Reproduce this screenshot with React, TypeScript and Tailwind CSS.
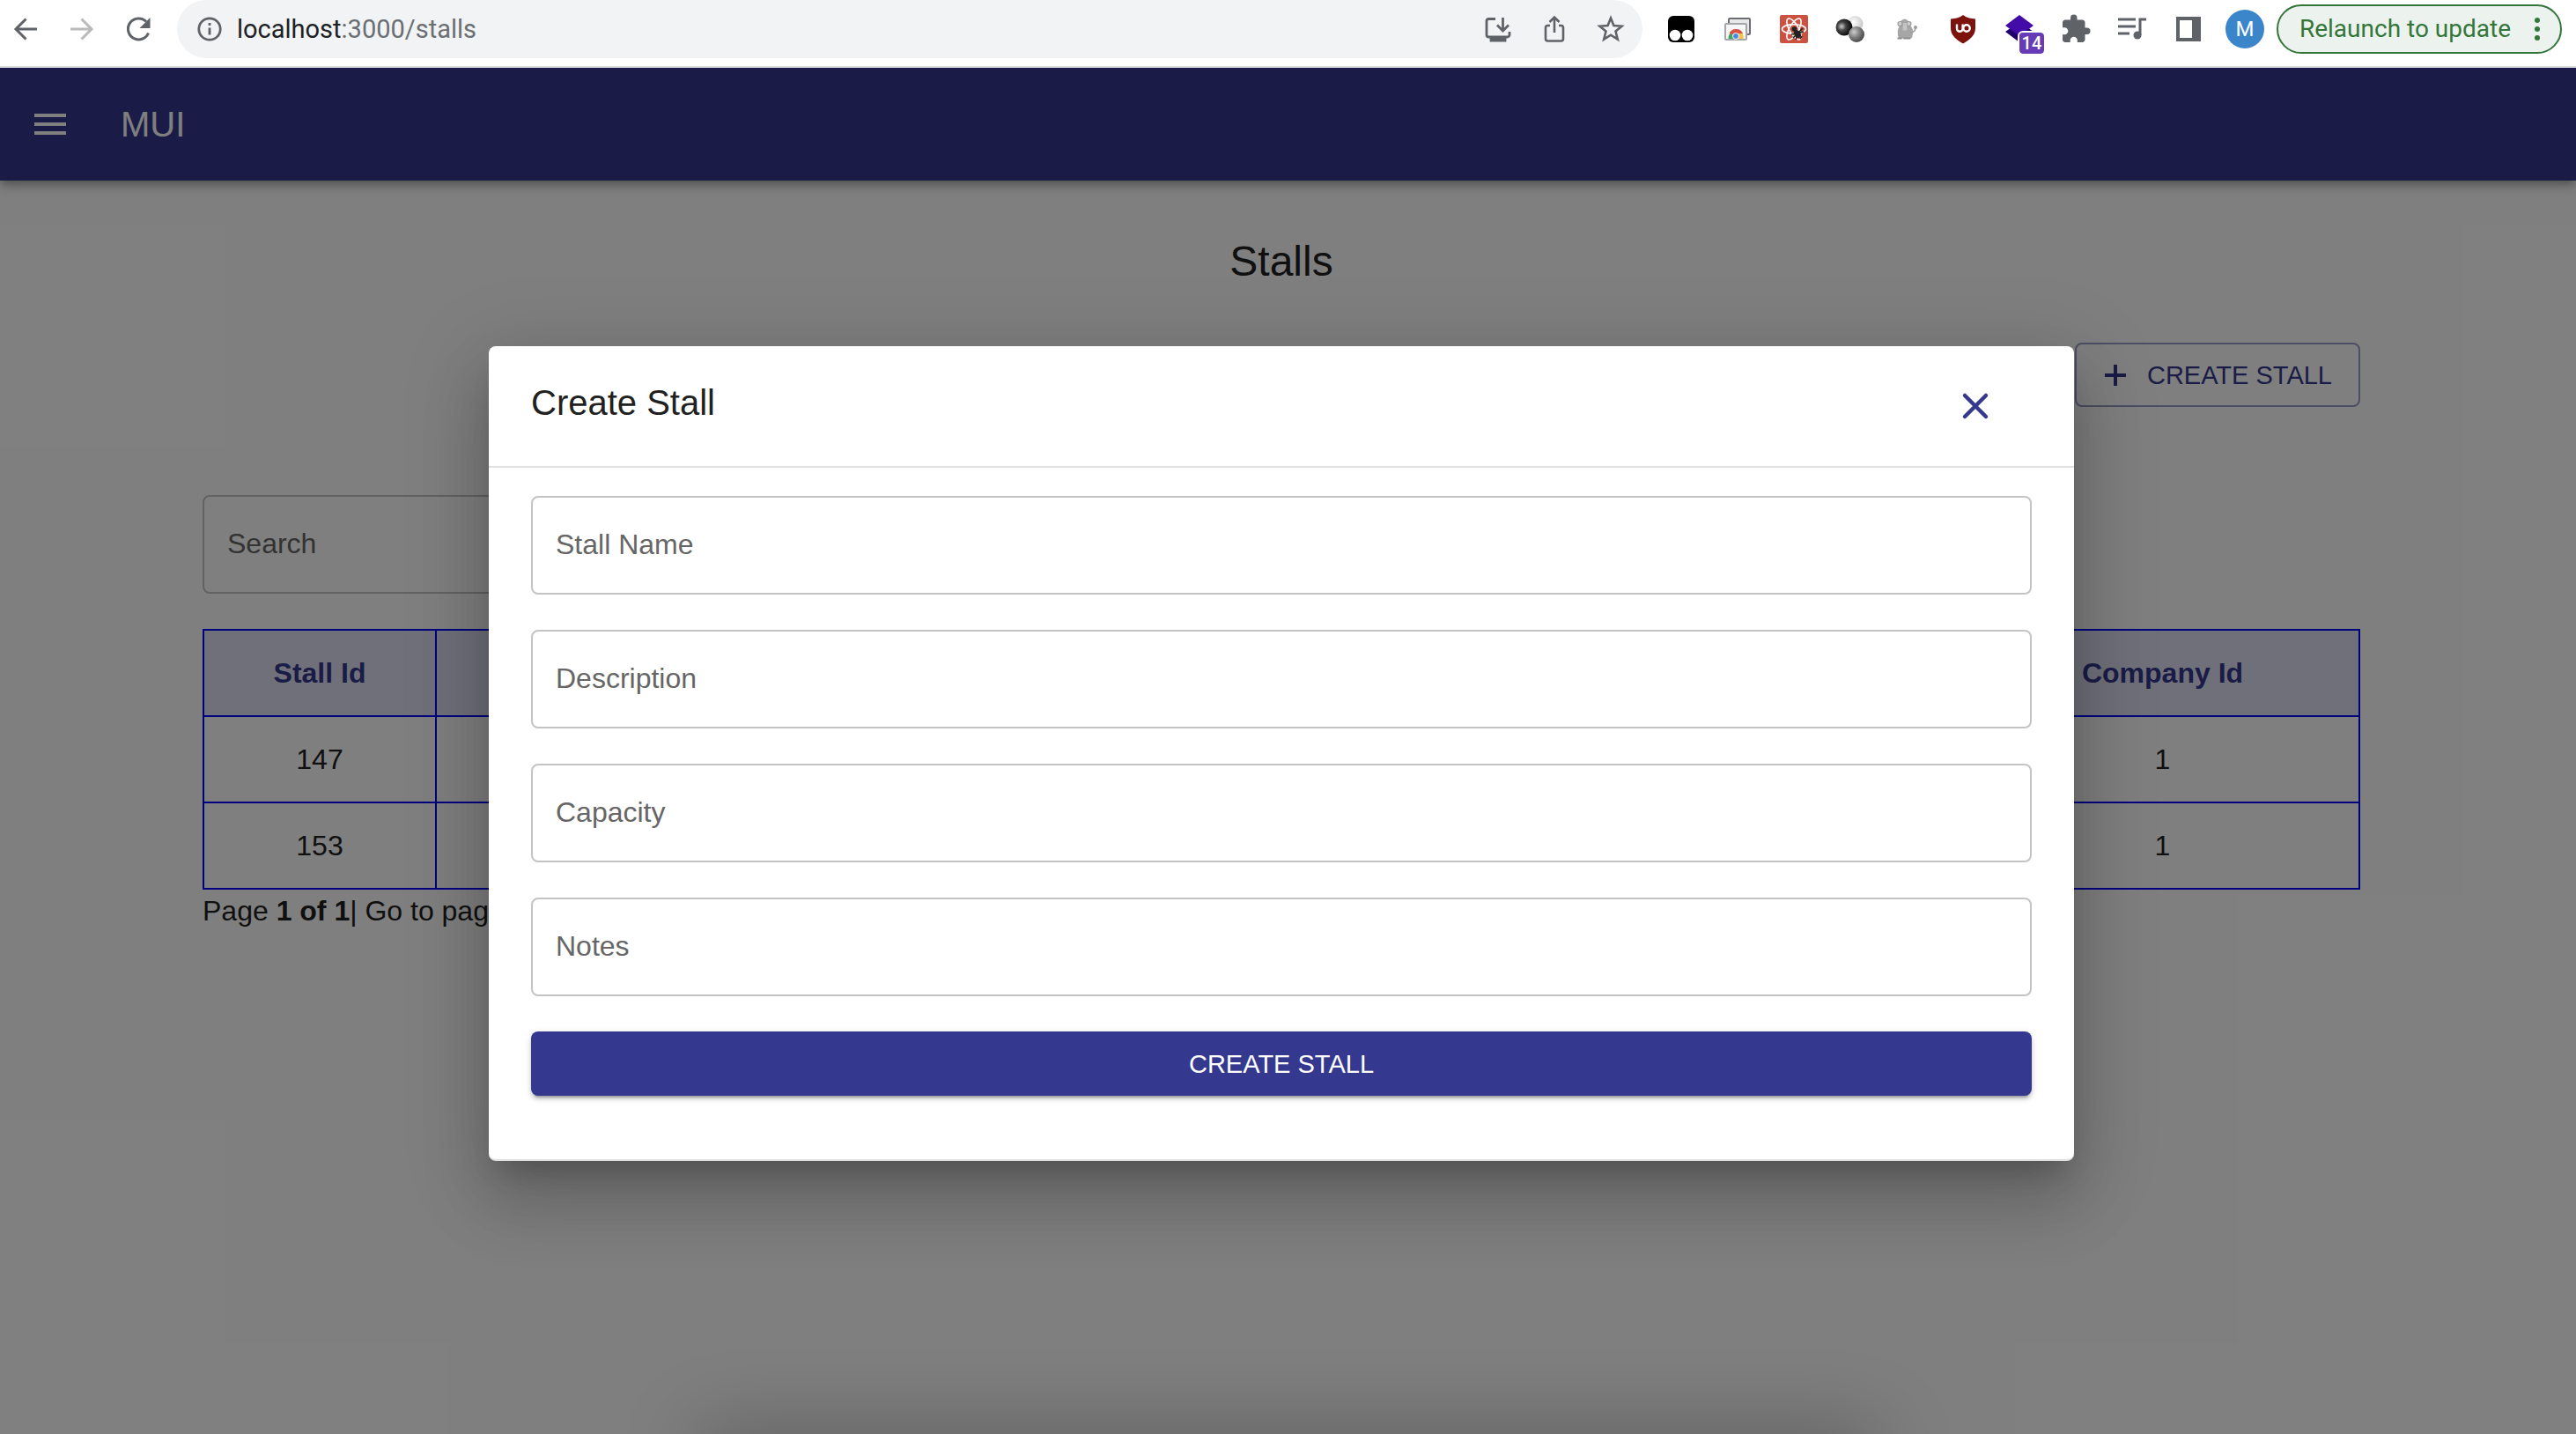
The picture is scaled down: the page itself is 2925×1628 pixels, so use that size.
import type { ReactNode } from "react";

function IconButton({ label, children }: { label: string; children: ReactNode }) {
  return (
    <button type="button" aria-label={label} className="relative flex h-8 w-8 shrink-0 items-center justify-center">
      {children}
    </button>
  );
}

const svg = "block h-9 w-9 shrink-0 overflow-visible";

function BackIcon() {
  return (
    <svg viewBox="0 0 36 36" className={svg} fill="none" stroke="currentColor" strokeWidth="3">
      <path d="M31 18H7M18.500 6.500 7 18l11.500 11.500" />
    </svg>
  );
}

function ForwardIcon() {
  return (
    <svg viewBox="0 0 36 36" className={svg} fill="none" stroke="currentColor" strokeWidth="3">
      <path d="M5 18h24M17.500 6.500 29 18 17.500 29.500" />
    </svg>
  );
}

function ReloadIcon() {
  return (
    <svg viewBox="0 0 36 36" className={svg} fill="none">
      <path d="M29.500 22.500A12 12 0 1 1 27 9.500" stroke="currentColor" strokeWidth="3" />
      <path d="M31.500 5v12h-12z" fill="currentColor" />
    </svg>
  );
}

function InfoIcon() {
  return (
    <svg viewBox="0 0 36 36" className={svg} fill="none" stroke="currentColor" strokeWidth="2.800">
      <circle cx="18" cy="18" r="12.200" />
      <path d="M18 16.500v8M18 11v3" />
    </svg>
  );
}

function InstallIcon() {
  return (
    <svg viewBox="0 0 36 36" className={svg} fill="none" stroke="currentColor" strokeWidth="2.800">
      <path d="M15 6.500H7.500a2.500 2.500 0 0 0-2.500 2.500v15.500a2.500 2.500 0 0 0 2.500 2.500h21a2.500 2.500 0 0 0 2.500-2.500V21" />
      <path d="M23.500 5v14M17 13.500l6.500 6.500 6.500-6.500" />
      <path d="M10 28h16v3H10z" fill="currentColor" />
    </svg>
  );
}

function ShareIcon() {
  return (
    <svg viewBox="0 0 36 36" className={svg} fill="none" stroke="currentColor" strokeWidth="2.600">
      <path d="M13 14H10.500A2.500 2.500 0 0 0 8 16.500V29a2.500 2.500 0 0 0 2.500 2.500h15A2.500 2.500 0 0 0 28 29V16.500a2.500 2.500 0 0 0-2.500-2.500H23" />
      <path d="M18 22V5.500M12.500 10 18 4.500l5.500 5.500" />
    </svg>
  );
}

function StarIcon() {
  return (
    <svg viewBox="0 0 36 36" className={svg} fill="none" stroke="currentColor" strokeWidth="2.600">
      <path d="m18 5.500 3.400 8.600 9.100.7-7 5.800 2.300 9L18 24.700l-7.800 4.900 2.300-9-7-5.800 9.100-.7z" />
    </svg>
  );
}

function MonkeyIcon() {
  return (
    <svg viewBox="0 0 36 36" className={svg}>
      <rect x="3" y="3" width="30" height="30" rx="6" fill="#000" />
      <circle cx="11" cy="25" r="6.300" fill="#fff" />
      <circle cx="25" cy="25" r="6.300" fill="#fff" />
    </svg>
  );
}

function RemoteIcon() {
  return (
    <svg viewBox="0 0 36 36" className={svg}>
      <rect x="8" y="6" width="24" height="18" rx="1" fill="#e9e9e9" stroke="#6b6f73" strokeWidth="2" />
      <rect x="4" y="12" width="24" height="18" rx="1" fill="#f6f6f6" stroke="#a4a7aa" strokeWidth="2" />
      <path d="M7.500 29a8.500 8.500 0 0 1 3-7l5 7z" fill="#3fa557" />
      <path d="M8.500 23a8.500 8.500 0 0 1 15.500 0l-8 2z" fill="#d8503f" />
      <path d="M24.500 29a8.500 8.500 0 0 0-1-6h-7l2 6z" fill="#f6c443" />
      <circle cx="16" cy="26" r="3.500" fill="#4a86e8" stroke="#fff" strokeWidth="1" />
    </svg>
  );
}

function ReactDevIcon() {
  return (
    <svg viewBox="0 0 36 36" className={svg}>
      <rect x="2" y="2" width="32" height="32" rx="2" fill="#cb5140" />
      <g fill="none" stroke="#fff" strokeWidth="1.600">
        <ellipse cx="18" cy="18" rx="13.500" ry="5.200" />
        <ellipse cx="18" cy="18" rx="13.500" ry="5.200" transform="rotate(60 18 18)" />
        <ellipse cx="18" cy="18" rx="13.500" ry="5.200" transform="rotate(120 18 18)" />
      </g>
      <ellipse cx="22" cy="23.500" rx="3.500" ry="5" transform="rotate(-35 22 23.500)" fill="#222" />
      <circle cx="18.500" cy="18" r="2.800" fill="#222" />
      <path d="m15 24 14-3M17 28l11-11M20 30l3-8M25 29l2-3" stroke="#222" strokeWidth="1.600" />
    </svg>
  );
}

function SpheresIcon() {
  return (
    <svg viewBox="0 0 36 36" className={svg}>
      <defs>
        <radialGradient id="sphereDark" cx="35%" cy="45%" r="65%">
          <stop offset="0" stopColor="#ccc" />
          <stop offset="0.400" stopColor="#444" />
          <stop offset="1" stopColor="#000" />
        </radialGradient>
        <radialGradient id="sphereLight" cx="40%" cy="40%" r="65%">
          <stop offset="0" stopColor="#fff" />
          <stop offset="1" stopColor="#c4c4c4" />
        </radialGradient>
        <radialGradient id="sphereMid" cx="35%" cy="35%" r="70%">
          <stop offset="0" stopColor="#ccc" />
          <stop offset="0.500" stopColor="#808080" />
          <stop offset="1" stopColor="#444" />
        </radialGradient>
      </defs>
      <circle cx="23.500" cy="12" r="9" fill="url(#sphereLight)" />
      <circle cx="11" cy="16" r="9.500" fill="url(#sphereDark)" />
      <circle cx="25" cy="24" r="9" fill="url(#sphereMid)" />
    </svg>
  );
}

function MascotIcon() {
  return (
    <svg viewBox="0 0 36 36" className={svg}>
      <path d="M11 9q5-5 9 0l2 5q4 4 3 9l-1 5q-7 2-15 0-3-7 1-14z" fill="#a6a6a6" />
      <circle cx="10.500" cy="12" r="2.500" fill="#d0d0d0" stroke="#9a9a9a" strokeWidth="1.200" />
      <circle cx="20.500" cy="12" r="2.500" fill="#d0d0d0" stroke="#9a9a9a" strokeWidth="1.200" />
      <path d="M14 11h4l.500 8q-2.500 1.500-5 0z" fill="#c4c4c4" />
      <path d="M7.500 28.500h5M14.500 28.500h8" stroke="#8c8c8c" strokeWidth="2" />
      <path d="m24 22 3-2 1-3" fill="none" stroke="#999" strokeWidth="1.500" />
      <circle cx="28" cy="16" r="2" fill="#999" />
    </svg>
  );
}

function ShieldIcon() {
  return (
    <svg viewBox="0 0 36 36" className={svg}>
      <path d="M18 2c4 3 8 4 14 4.500V17c0 8-6 13-14 17.500C10 30 4 25 4 17V6.500C10 6 14 5 18 2z" fill="#7c130d" />
      <path d="M11 12.500v5a3.300 3.300 0 0 0 6.600 0v-5" fill="none" stroke="#fff" strokeWidth="2.400" />
      <circle cx="22" cy="17" r="3.700" fill="none" stroke="#fff" strokeWidth="2.400" />
    </svg>
  );
}

function LayersIcon() {
  return (
    <svg viewBox="0 0 36 36" className={svg}>
      <path d="m18 10 16 11-16 12L2 21z" fill="#21006b" />
      <path d="m18 2 16 12-16 12L2 14z" fill="#430ca8" />
    </svg>
  );
}

function PuzzleIcon() {
  return (
    <svg viewBox="0 0 24 24" className={svg} fill="currentColor">
      <path d="M20.500 11H19V7c0-1.100-.9-2-2-2h-4V3.500a2.500 2.500 0 0 0-5 0V5H4c-1.100 0-1.990.9-1.990 2v3.800H3.500c1.490 0 2.700 1.210 2.700 2.700s-1.210 2.700-2.700 2.700H2V20c0 1.100.9 2 2 2h3.800v-1.500c0-1.490 1.210-2.700 2.700-2.700s2.700 1.210 2.700 2.700V22H17c1.100 0 2-.9 2-2v-4h1.500a2.500 2.500 0 0 0 0-5z" />
    </svg>
  );
}

function QueueIcon() {
  return (
    <svg viewBox="0 0 36 36" className={svg} fill="none" stroke="currentColor" strokeWidth="3">
      <path d="M2 7h20M2 15h20M2 23h13M27 25V7h7" />
      <circle cx="24" cy="25" r="4.500" fill="currentColor" stroke="none" />
    </svg>
  );
}

function PanelIcon() {
  return (
    <svg viewBox="0 0 36 36" className={svg} fill="currentColor">
      <path fillRule="evenodd" d="M4 4h28v28H4zM8 8h14v20H8z" />
    </svg>
  );
}

function BrowserBar() {
  return (
    <div className="relative flex h-[77px] shrink-0 items-start border-b-2 border-[#dadcdf] bg-white pr-4 pl-[13px] text-[#5f6368]">
      <div className="flex h-[66px] items-center gap-8 pr-7">
        <IconButton label="Back"><BackIcon /></IconButton>
        <span className="flex text-[#bababc]">
          <IconButton label="Forward"><ForwardIcon /></IconButton>
        </span>
        <IconButton label="Reload"><ReloadIcon /></IconButton>
      </div>
      <div className="flex h-[66px] min-w-0 flex-1 items-center rounded-full bg-[#f1f3f4] pr-5 pl-[21px]">
        <IconButton label="Site information"><InfoIcon /></IconButton>
        <div className="ml-[15px] flex-1 font-[Roboto,sans-serif] text-[29px] leading-9 text-[#6b6e72]">
          <span className="text-[#202124]">localhost</span>:3000/stalls
        </div>
        <div className="flex gap-8">
          <IconButton label="Install app"><InstallIcon /></IconButton>
          <IconButton label="Share"><ShareIcon /></IconButton>
          <IconButton label="Bookmark"><StarIcon /></IconButton>
        </div>
      </div>
      <div className="flex h-[66px] shrink-0 items-center gap-8 pl-7">
        <IconButton label="Userscripts"><MonkeyIcon /></IconButton>
        <IconButton label="Remote desktop"><RemoteIcon /></IconButton>
        <IconButton label="React developer tools"><ReactDevIcon /></IconButton>
        <IconButton label="Spheres"><SpheresIcon /></IconButton>
        <IconButton label="Mascot"><MascotIcon /></IconButton>
        <IconButton label="Content blocker"><ShieldIcon /></IconButton>
        <IconButton label="Layers">
          <LayersIcon />
          <span className="absolute top-5 left-4 flex h-6 w-7 items-center justify-center rounded bg-[#673ab7] font-[Roboto,sans-serif] text-xl leading-6 font-medium text-white outline-2 outline-white">
            14
          </span>
        </IconButton>
        <IconButton label="Extensions"><PuzzleIcon /></IconButton>
        <IconButton label="Media controls"><QueueIcon /></IconButton>
        <IconButton label="Side panel"><PanelIcon /></IconButton>
      </div>
      <div className="flex h-[66px] shrink-0 items-center gap-3.5 pl-[26px]">
        <button type="button" className="flex h-11 w-11 items-center justify-center rounded-full bg-[#3b86cb] font-[Roboto,sans-serif] text-2xl text-white">
          M
        </button>
        <button type="button" className="flex h-14 items-center gap-5 rounded-full border-2 border-[#34763a] bg-[#ecf3ef] pr-4 pl-6 font-[Roboto,sans-serif] text-[28px] leading-9 whitespace-nowrap text-[#34763a]">
          Relaunch to update
          <svg viewBox="0 0 20 28" className="h-7 w-5" fill="currentColor">
            <circle cx="10" cy="4" r="3" />
            <circle cx="10" cy="14" r="3" />
            <circle cx="10" cy="24" r="3" />
          </svg>
        </button>
      </div>
    </div>
  );
}

function AppBar() {
  return (
    <header className="relative flex h-32 items-center gap-14 bg-[#34398f] px-[33px] text-white shadow-[0_4px_8px_-2px_rgba(0,0,0,0.2),0_8px_10px_0_rgba(0,0,0,0.14),0_2px_20px_0_rgba(0,0,0,0.12)]">
      <button type="button" aria-label="Open menu">
        <svg viewBox="0 0 24 24" className="block h-12 w-12" fill="currentColor">
          <path d="M3 18h18v-2H3v2zm0-5h18v-2H3v2zm0-7v2h18V6H3z" />
        </svg>
      </button>
      <div className="text-[40px] leading-[64px]">MUI</div>
    </header>
  );
}

const stalls = [
  { id: 147, companyId: 1 },
  { id: 153, companyId: 1 },
];

const cell = "border-2 border-[#0000ff] p-0 text-center";

function StallsPage() {
  return (
    <main className="mx-auto w-full max-w-[2450px] pt-[62px] text-[#212121]">
      <h1 className="text-center text-5xl leading-[60px]">Stalls</h1>
      <div className="mt-[62px] flex justify-end">
        <button type="button" className="flex h-[73px] items-center gap-5 rounded-lg border-2 border-[#999cc7] pr-[30px] pl-7 text-[29px] leading-[52px] text-[#34398f]">
          <svg viewBox="0 0 32 32" className="h-8 w-8" fill="none" stroke="currentColor" strokeWidth="4">
            <path d="M16 4v24M4 16h24" />
          </svg>
          CREATE STALL
        </button>
      </div>
      <input
        type="text"
        aria-label="Search"
        placeholder="Search"
        className="mt-[100px] block h-28 w-1/3 rounded-lg border-2 border-[#c4c4c4] px-[26px] pb-0.5 text-[32px] placeholder:text-[#666666]"
      />
      <table className="mt-10 w-full table-fixed border-collapse text-[32px] leading-9">
        <thead>
          <tr className="h-[98px] bg-[#e1e1f4] text-[#34398f]">
            <th className={cell + " w-[264px]"}>Stall Id</th>
            <td className={cell} />
            <th className={cell + " w-[447px]"}>Company Id</th>
          </tr>
        </thead>
        <tbody>
          {stalls.map((stall) => (
            <tr key={stall.id} className="h-[98px]">
              <td className={cell}>{stall.id}</td>
              <td className={cell} />
              <td className={cell}>{stall.companyId}</td>
            </tr>
          ))}
        </tbody>
      </table>
      <p className="text-[32px] leading-[48px]">
        Page <strong>1 of 1</strong>| Go to page
      </p>
    </main>
  );
}

const fields = ["Stall Name", "Description", "Capacity", "Notes"];

function CreateStallDialog() {
  return (
    <div
      role="dialog"
      aria-labelledby="dialog-title"
      className="w-[1800px] max-w-full rounded-lg border-b-2 border-[#e0e0e0] bg-white shadow-[0_22px_30px_-14px_rgba(0,0,0,0.2),0_48px_76px_6px_rgba(0,0,0,0.14),0_18px_92px_16px_rgba(0,0,0,0.12)]"
    >
      <div className="flex h-[138px] items-start justify-between border-b-2 border-[#e0e0e0] pt-8 pr-[88px] pl-12">
        <h2 id="dialog-title" className="text-[40px] leading-[64px] text-[#212121]">Create Stall</h2>
        <button type="button" aria-label="Close" className="mt-3 text-[#34398f]">
          <svg viewBox="0 0 48 48" className="block h-12 w-12" fill="none" stroke="currentColor" strokeWidth="4.500" strokeLinecap="round">
            <path d="m12 12 24 24M36 12 12 36" />
          </svg>
        </button>
      </div>
      <form className="flex flex-col gap-10 px-12 pt-8 pb-[72px]">
        {fields.map((field) => (
          <input
            key={field}
            type="text"
            aria-label={field}
            placeholder={field}
            className="h-28 w-full rounded-lg border-2 border-[#c4c4c4] px-[26px] pb-0.5 text-[32px] placeholder:text-[#666666]"
          />
        ))}
        <button type="button" className="h-[73px] w-full rounded-lg bg-[#34398f] text-[29px] leading-[52px] text-white shadow-[0_6px_2px_-4px_rgba(0,0,0,0.2),0_4px_4px_0_rgba(0,0,0,0.14),0_2px_10px_0_rgba(0,0,0,0.12)]">
          CREATE STALL
        </button>
      </form>
    </div>
  );
}

export default function App() {
  return (
    <div className="flex min-h-screen flex-col overflow-hidden bg-white font-['Liberation_Sans',Arial,sans-serif]">
      <BrowserBar />
      <div className="relative flex-1 overflow-hidden">
        <AppBar />
        <div className="pr-[15px]">
          <StallsPage />
        </div>
        <div className="absolute inset-0 flex items-center justify-center bg-black/50 pt-1.5 pr-[15px]">
          <CreateStallDialog />
          <div className="absolute -bottom-10 left-1/2 h-8 w-[45%] -translate-x-1/2 shadow-[0_0_90px_10px_rgba(0,0,0,0.32)]" />
        </div>
      </div>
    </div>
  );
}
